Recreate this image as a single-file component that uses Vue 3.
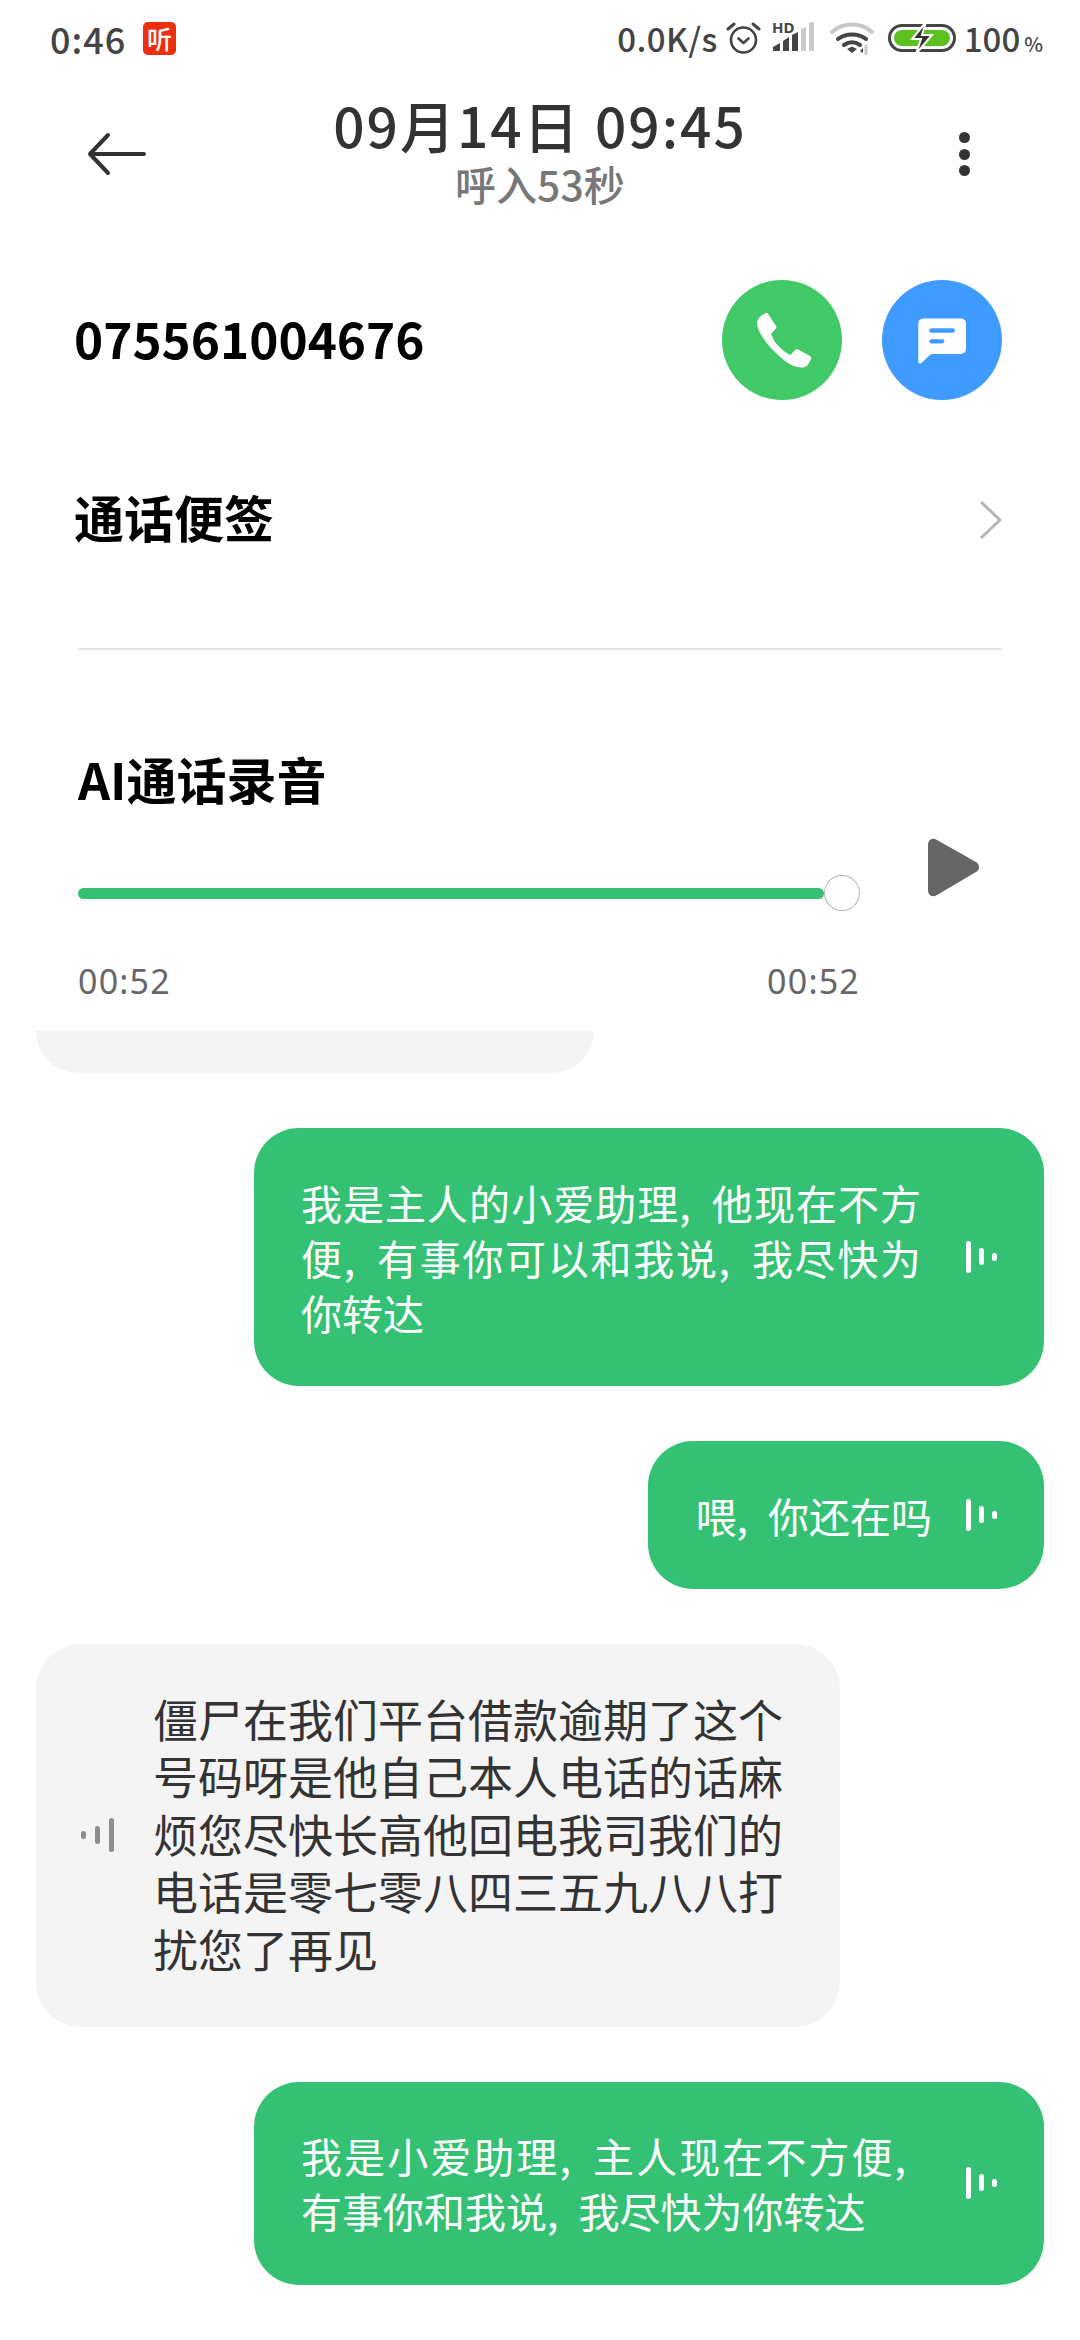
<script setup>
const messages = [
  { id: 1, from: 'me', wide: true, width: 620, lines: ['我是主人的小爱助理, 他现在不方', '便, 有事你可以和我说, 我尽快为', '你转达'] },
  { id: 2, from: 'me', wide: false, lines: ['喂, 你还在吗'] },
  { id: 3, from: 'other', wide: false, lines: ['僵尸在我们平台借款逾期了这个', '号码呀是他自己本人电话的话麻', '烦您尽快长高他回电我司我们的', '电话是零七零八四三五九八八打', '扰您了再见'] },
  { id: 4, from: 'me', wide: true, width: 605, lines: ['我是小爱助理, 主人现在不方便,', '有事你和我说, 我尽快为你转达'] }
]
</script>

<template>
  <div class="screen">
    <div class="status">
      <div class="status-left">
        <span class="clock">0:46</span>
        <span class="ting">听</span>
      </div>
      <div class="status-right">
        <span class="speed">0.0K/s</span>
        <svg class="alarm" width="35" height="34" viewBox="0 0 35 34" fill="none" stroke="#444" stroke-width="2.6" stroke-linecap="round" stroke-linejoin="round">
          <circle cx="17.500" cy="19" r="12.500" />
          <path d="M12.500 17.500l5 4.500 5-4.500" />
          <path d="M2 8l6-5M33 8l-6-5" stroke-width="3" />
        </svg>
        <svg class="signal" width="44" height="46" viewBox="0 -6 44 46">
          <text x="0" y="12" font-family="Noto Sans" font-weight="700" font-size="15" fill="#444">HD</text>
          <path d="M1 30v-4l7-4v8z" fill="#444" />
          <path d="M11 30V20l6-4v14z" fill="#444" />
          <path d="M20 30V14l6-3v19z" fill="#444" />
          <path d="M29 30V8l5-2v24z" fill="#c9c9c9" />
          <path d="M37 30V2l5-1v29z" fill="#c9c9c9" />
        </svg>
        <svg class="wifi" width="45" height="34" viewBox="0 0 45 34" fill="none" stroke-linecap="round">
          <path d="M2 11C13 1 31 1 42 11" stroke="#c9c9c9" stroke-width="4" />
          <path d="M8 18c8-6 20-6 28 0" stroke="#444" stroke-width="4" />
          <path d="M14 24c5-3.500 11-3.500 16 0" stroke="#444" stroke-width="4" />
          <path d="M17 28l5-2.500 5 2.500-5 4z" fill="#444" />
          <path d="M36 25v8" stroke="#c9c9c9" stroke-width="3" />
          <path d="M33 27l-3 3 3 2z" fill="#444" />
        </svg>
        <svg class="battery" width="68" height="32" viewBox="0 0 68 32">
          <rect x="1.500" y="3.500" width="65" height="25" rx="12.500" fill="#fff" stroke="#444" stroke-width="3" />
          <rect x="6" y="8" width="56" height="16" rx="8" fill="#5cc01e" />
          <path d="M38 0L24 17h9l-5 15 16-19h-10z" fill="#333" stroke="#fff" stroke-width="2" />
        </svg>
        <span class="level">100<small>%</small></span>
      </div>
    </div>

    <header class="topbar">
      <svg class="back" width="60" height="44" viewBox="0 0 60 44" fill="none" stroke="#333" stroke-width="4" stroke-linecap="round" stroke-linejoin="round">
        <path d="M21 3L3 22l18 19M3 22h54" />
      </svg>
      <div class="title">
        <div class="date">09月14日 09:45</div>
        <div class="duration">呼入53秒</div>
      </div>
      <div class="more"><i></i><i></i><i></i></div>
    </header>

    <section class="contact">
      <div class="number">075561004676</div>
      <div class="actions">
        <div class="round call">
          <svg width="120" height="120" viewBox="0 0 120 120">
            <path fill="#fff" d="M43 33.500c1.500-.8 2.800-.3 3.500 1L54 46c.7 1.200.5 2-.5 3L49 54c2.500 6 5 10 9 13.500 3.500 3.500 6 5.500 10.500 7.500L73 70c1-1 2-1 3-.5L88 76c1.200.7 1.500 1.700 1 3-1.500 4-4 8-8 8.500C72 88 63 82 55 74 46 66 37 54 35 45c-.7-5 3-9.500 8-11.500z" />
          </svg>
        </div>
        <div class="round sms">
          <svg width="120" height="120" viewBox="0 0 120 120">
            <path fill="#fff" d="M41 38.500H79a5 5 0 0 1 5 5V69a5 5 0 0 1-5 5H49l-9.500 9c-1.200 1-3.200.5-3.200-1.500V43.500a5 5 0 0 1 4.700-5z" />
            <rect x="47.300" y="48.300" width="25.700" height="4.400" rx="2.200" fill="#3f9bff" />
            <rect x="47.300" y="59.200" width="15" height="4.200" rx="2.100" fill="#3f9bff" />
          </svg>
        </div>
      </div>
    </section>

    <section class="note">
      <span class="note-title">通话便签</span>
      <svg width="22" height="38" viewBox="0 0 22 38" fill="none" stroke="#b5b5b5" stroke-width="3" stroke-linecap="round" stroke-linejoin="round">
        <path d="M2 2l18 17L2 36" />
      </svg>
    </section>

    <section class="record">
      <h2>AI通话录音</h2>
      <div class="player">
        <div class="track">
          <div class="bar"></div>
          <div class="thumb"></div>
        </div>
        <svg class="play" width="52" height="60" viewBox="0 0 52 60">
          <path fill="#666" d="M0 7c0-5 4-8 9-5l39 22c4 2 4 8 0 10L9 57c-5 3-9 0-9-5z" />
        </svg>
      </div>
      <div class="times"><span>00:52</span><span>00:52</span></div>
    </section>

    <div class="chat">
      <div class="stub"></div>
      <div v-for="m in messages" :key="m.id" class="row" :class="m.from">
        <div class="bubble" :class="{ wide: m.wide }">
          <svg v-if="m.from === 'other'" class="wave" width="34" height="34" viewBox="0 0 34 34">
            <rect x="0" y="13" width="5" height="8" rx="2.500" fill="#8d8d8d" />
            <rect x="14" y="8" width="5" height="18" rx="2.500" fill="#8d8d8d" />
            <rect x="28" y="0" width="5" height="34" rx="2.500" fill="#8d8d8d" />
          </svg>
          <div class="text" :style="m.width ? { width: m.width + 'px' } : null">
            <div v-for="line in m.lines" :key="line">{{ line }}</div>
          </div>
          <svg v-if="m.from === 'me'" class="wave" width="32" height="32" viewBox="0 0 32 32">
            <rect x="0" y="0" width="5" height="32" rx="2.500" fill="#fff" />
            <rect x="13" y="7" width="5" height="17" rx="2.500" fill="#fff" />
            <rect x="26" y="12" width="5" height="8" rx="2.500" fill="#fff" />
          </svg>
        </div>
      </div>
    </div>
  </div>
</template>

<style>
html, body { margin: 0; background: #fff; }
</style>

<style scoped>
.screen {
  width: 1080px;
  height: 2340px;
  overflow: hidden;
  background: #fff;
  font-family: "Noto Sans CJK SC", "Noto Sans", sans-serif;
  display: flex;
  flex-direction: column;
}

.status {
  height: 76px;
  display: flex;
  justify-content: space-between;
  align-items: center;
  padding: 0 37px 0 50px;
  color: #444;
  font-size: 33px;
  font-weight: 500;
  flex-shrink: 0;
}
.status-left, .status-right { display: flex; align-items: center; }
.clock { width: 93px; font-size: 36px; letter-spacing: 1px; }
.ting {
  width: 33px;
  height: 33px;
  border-radius: 5px;
  background: #ec2f0f;
  color: #fff;
  font-size: 25px;
  line-height: 33px;
  text-align: center;
}
.speed { margin-right: 8px; letter-spacing: 0.400px; }
.alarm { margin-right: 11px; }
.signal { margin-right: 14px; }
.wifi { margin-right: 13px; }
.battery { margin-right: 8px; }
.level small { font-size: 20px; margin-left: 4px; }

.topbar {
  height: 156px;
  display: grid;
  grid-template-columns: 1fr auto 1fr;
  align-items: center;
  padding: 0 87px;
  flex-shrink: 0;
}
.title { text-align: center; padding-bottom: 12px; }
.date {
  font-size: 55px;
  font-weight: 500;
  line-height: 66px;
  letter-spacing: 2px;
  color: #333;
}
.duration {
  font-size: 41px;
  line-height: 46px;
  margin-top: 3px;
  color: #777;
  font-weight: 500;
}
.more {
  display: flex;
  flex-direction: column;
  gap: 5.500px;
  justify-self: end;
  margin-right: 23px;
}
.more i {
  width: 11px;
  height: 11px;
  border-radius: 50%;
  background: #333;
}

.contact {
  height: 216px;
  display: flex;
  align-items: center;
  justify-content: space-between;
  padding: 0 78px 0 74px;
  flex-shrink: 0;
}
.number {
  font-size: 49.500px;
  font-weight: 700;
  color: #000;
  padding-bottom: 6px;
}
.actions { display: flex; gap: 40px; }
.round {
  width: 120px;
  height: 120px;
  border-radius: 50%;
}
.round svg { display: block; }
.call { background: #40c966; }
.sms { background: #3f9bff; }

.note {
  margin: 0 78px 0 74px;
  padding: 32px 0 96px;
  display: flex;
  justify-content: space-between;
  align-items: center;
  flex-shrink: 0;
}
.note svg { margin-top: 8px; }
.note-title {
  font-size: 50px;
  line-height: 72px;
  font-weight: 700;
  color: #000;
}

.record {
  margin: 0 78px 27px;
  padding-top: 93px;
  border-top: 2px solid #e5e5e5;
  flex-shrink: 0;
}
.record h2 {
  margin: 0;
  font-size: 50px;
  font-weight: 700;
  color: #000;
  line-height: 70px;
}
.player {
  display: flex;
  align-items: flex-start;
  margin-top: 25px;
  height: 73px;
}
.track {
  width: 782px;
  display: flex;
  align-items: center;
  align-self: flex-end;
}
.bar {
  width: 748px;
  height: 11px;
  background: #34c172;
  border-radius: 6px;
}
.thumb {
  width: 36px;
  height: 36px;
  box-sizing: border-box;
  border: 1px solid #b5b5b5;
  border-radius: 50%;
  background: #fff;
}
.play { margin-left: 68px; }
.times {
  width: 782px;
  display: flex;
  justify-content: space-between;
  margin-top: 47px;
  font-size: 34px;
  line-height: 46px;
  letter-spacing: 1.200px;
  color: #666;
  font-family: "Noto Sans", sans-serif;
}

.chat {
  display: flex;
  flex-direction: column;
  gap: 55px;
  padding: 0 36px;
}
.stub {
  width: 558px;
  height: 42px;
  flex-shrink: 0;
  background: #f4f4f4;
  border-radius: 0 0 45px 45px;
}
.row { display: flex; flex-shrink: 0; }
.row.me { justify-content: flex-end; }
.bubble {
  display: flex;
  align-items: center;
  border-radius: 45px;
  box-sizing: border-box;
}
.me .bubble {
  background: #35c174;
  color: #fff;
  padding: 46.500px 46px 46.500px 47px;
  font-size: 41px;
  line-height: 55px;
  word-spacing: 11px;
  gap: 34px;
}
.me .bubble.wide {
  width: 790px;
  justify-content: space-between;
}
.wide .text div:not(:last-child) {
  text-align-last: justify;
}
.other .bubble {
  width: 804px;
  background: #f4f4f4;
  color: #333;
  padding: 45.500px 0 49.500px 45px;
  font-size: 45px;
  line-height: 57.600px;
  gap: 38px;
}
.other .wave { margin-top: 4px; }
.wave { flex-shrink: 0; }
.text { white-space: nowrap; }
</style>
